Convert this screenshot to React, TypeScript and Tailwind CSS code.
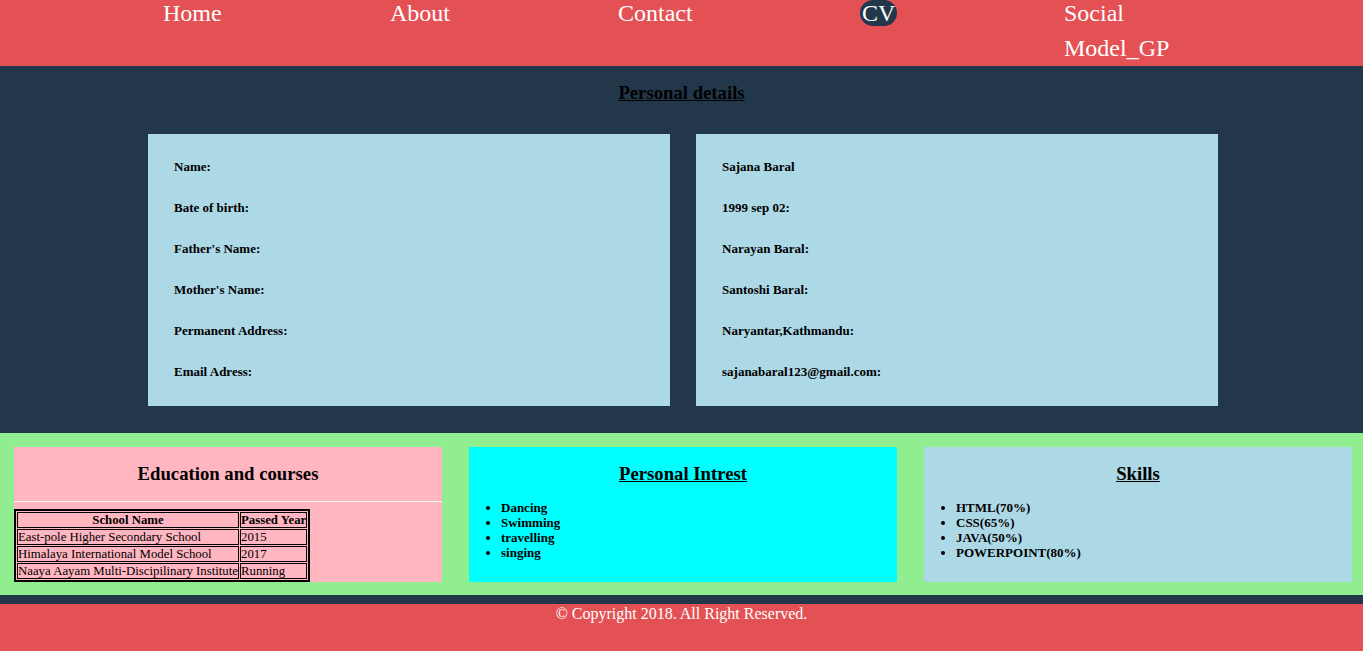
const NAV = [
  { label: "Home", w: "w-[227px]" },
  { label: "About", w: "w-[228px]" },
  { label: "Contact", w: "w-[243px]" },
  { label: "CV", w: "w-[203px]", active: true },
  { label: "Social Model_GP", w: "w-[130px]" },
];

const LABELS = [
  "Name:",
  "Bate of birth:",
  "Father's Name:",
  "Mother's Name:",
  "Permanent Address:",
  "Email Adress:",
];

const VALUES = [
  "Sajana Baral",
  "1999 sep 02:",
  "Narayan Baral:",
  "Santoshi Baral:",
  "Naryantar,Kathmandu:",
  "sajanabaral123@gmail.com:",
];

const SCHOOLS = [
  ["East-pole Higher Secondary School", "2015"],
  ["Himalaya International Model School", "2017"],
  ["Naaya Aayam Multi-Discipilinary Institute", "Running"],
];

const INTERESTS = ["Dancing", "Swimming", "travelling", "singing"];
const SKILLS = ["HTML(70%)", "CSS(65%)", "JAVA(50%)", "POWERPOINT(80%)"];

function InfoCard({ rows }: { rows: string[] }) {
  return (
    <div className="w-[522px] bg-[#add8e6] px-[26px] pt-[12px] pb-[14px]">
      {rows.map((r) => (
        <div key={r} className="text-[13px] font-bold leading-[41px] text-black">
          {r}
        </div>
      ))}
    </div>
  );
}

function ListBox({ title, items, bg }: { title: string; items: string[]; bg: string }) {
  return (
    <div className={"w-[428px] h-[135px] pt-[16px] " + bg}>
      <h3 className="text-center text-[18.72px] font-bold leading-[22px] underline text-black">{title}</h3>
      <ul className="list-disc pl-[32px] mt-[15px] text-[13px] font-bold leading-[15px] text-black">
        {items.map((i) => (
          <li key={i}>{i}</li>
        ))}
      </ul>
    </div>
  );
}

export default function App() {
  return (
    <div className="w-[1363px] min-h-[651px] bg-[#e45155] font-['Liberation_Serif',serif]">
      {/* top nav */}
      <header className="h-[66px] bg-[#e45155] overflow-hidden">
        <ul className="flex items-start pl-[163px] -mt-[4px] text-[24px] leading-[35px] text-white">
          {NAV.map((n) => (
            <li key={n.label} className={n.w + " shrink-0"}>
              {n.active ? (
                <span className="bg-[#22374a] rounded-full px-[2px] -ml-[1px]">{n.label}</span>
              ) : (
                n.label
              )}
            </li>
          ))}
        </ul>
      </header>

      {/* personal details */}
      <section className="bg-[#22374a] pt-[16px] pb-[27px]">
        <h3 className="text-center text-[18.72px] font-bold leading-[22px] underline text-black">Personal details</h3>
        <div className="flex gap-[26px] mt-[30px] pl-[148px]">
          <InfoCard rows={LABELS} />
          <InfoCard rows={VALUES} />
        </div>
      </section>

      {/* education / interest / skills */}
      <section className="bg-[#90ee90] flex gap-[27px] pl-[14px] pr-[11px] pt-[14px] pb-[13px]">
        <div className="w-[428px] h-[135px] bg-[#ffb6c1] pt-[16px]">
          <h3 className="text-center text-[18.72px] font-bold leading-[22px] text-black">Education and courses</h3>
          <div className="mt-[16px] h-px bg-[#f4f4f4]" />
          <table className="mt-[7px] border-2 border-black border-separate border-spacing-[1px] text-[12.8px] leading-[14px] text-black">
            <thead>
              <tr>
                <th className="border border-black p-0 font-bold">School Name</th>
                <th className="border border-black p-0 font-bold">Passed Year</th>
              </tr>
            </thead>
            <tbody>
              {SCHOOLS.map(([s, y]) => (
                <tr key={s}>
                  <td className="border border-black p-0">{s}</td>
                  <td className="border border-black p-0">{y}</td>
                </tr>
              ))}
            </tbody>
          </table>
        </div>
        <ListBox title="Personal Intrest" items={INTERESTS} bg="bg-[#00ffff]" />
        <ListBox title="Skills" items={SKILLS} bg="bg-[#add8e6]" />
      </section>

      <div className="h-[9px] bg-[#22374a]" />

      <footer className="h-[47px] bg-[#e45155] text-center text-[16px] leading-[20px] text-white">
        © Copyright 2018. All Right Reserved.
      </footer>
    </div>
  );
}
